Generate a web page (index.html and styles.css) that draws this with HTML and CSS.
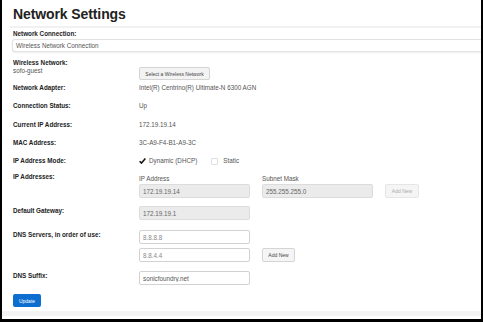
FILE: index.html
```html
<!DOCTYPE html>
<html lang="en">
<head>
    <meta charset="UTF-8">
    <title>Network Settings</title>
    <link rel="stylesheet" href="styles.css">
</head>
<body>
    <div class="frame">
        <div class="page">
            <h1>Network Settings</h1>

            <div class="conn">
                <div class="conn-label">Network Connection:</div>
                <div class="conn-box">Wireless Network Connection</div>
            </div>

            <div class="row wireless">
                <div>
                    <div class="label">Wireless Network:</div>
                    <div class="sub-value">sofo-guest</div>
                </div>
                <div>
                    <button class="btn select-btn">Select a Wireless Network</button>
                </div>
            </div>

            <div class="row info first">
                <div class="label">Network Adapter:</div>
                <div class="value">Intel(R) Centrino(R) Ultimate-N 6300 AGN</div>
            </div>
            <div class="row info">
                <div class="label">Connection Status:</div>
                <div class="value">Up</div>
            </div>
            <div class="row info">
                <div class="label">Current IP Address:</div>
                <div class="value">172.19.19.14</div>
            </div>
            <div class="row info">
                <div class="label">MAC Address:</div>
                <div class="value">3C-A9-F4-B1-A9-3C</div>
            </div>
            <div class="row info">
                <div class="label">IP Address Mode:</div>
                <div class="value mode">
                    <span class="check">
                        <svg width="7" height="6" viewBox="0 0 7 6"><path d="M0.6 3.2 L2.5 5.1 L6.4 0.6" fill="none" stroke="#111" stroke-width="1.5"/></svg>
                    </span>
                    <span>Dynamic (DHCP)</span>
                    <span class="box"></span>
                    <span>Static</span>
                </div>
            </div>

            <div class="row ip-row">
                <div class="label">IP Addresses:</div>
                <div class="ip-grid">
                    <div>
                        <div class="small-label">IP Address</div>
                        <input class="field disabled" type="text" value="172.19.19.14" disabled>
                    </div>
                    <div>
                        <div class="small-label">Subnet Mask</div>
                        <input class="field disabled" type="text" value="255.255.255.0" disabled>
                    </div>
                    <button class="btn add-btn" disabled>Add New</button>
                </div>
            </div>

            <div class="row gateway">
                <div class="label">Default Gateway:</div>
                <div><input class="field disabled" type="text" value="172.19.19.1" disabled></div>
            </div>

            <div class="row dns">
                <div class="label">DNS Servers, in order of use:</div>
                <div>
                    <input class="field light" type="text" value="8.8.8.8">
                    <div class="dns-second">
                        <input class="field light" type="text" value="8.8.4.4">
                        <button class="btn add-btn enabled">Add New</button>
                    </div>
                </div>
            </div>

            <div class="row suffix">
                <div class="label">DNS Suffix:</div>
                <div><input class="field" type="text" value="sonicfoundry.net"></div>
            </div>

            <button class="update-btn">Update</button>
        </div>
        <div class="footer"></div>
    </div>
</body>
</html>
```

FILE: styles.css
```css
body {
    margin: 0;
    padding: 0;
    font-family: "Liberation Sans", Arial, sans-serif;
    background: white;
}
.frame {
    height: 322px;
    box-sizing: border-box;
    border-left: 2px solid #000;
    border-right: 2px solid #000;
    border-bottom: 3px solid #000;
    display: flex;
    flex-direction: column;
    overflow: hidden;
}
.page {
    flex: 1;
    padding-left: 11px;
}
h1 {
    margin: 0;
    padding-top: 4px;
    font-size: 14px;
    line-height: 20px;
    color: #222;
    letter-spacing: -0.1px;
}
.conn {
    margin-top: 2px;
    margin-left: -3px;
    padding-left: 3px;
    border-top: 2px solid #f1f1f1;
}
.conn-label {
    margin-top: 2px;
    font-size: 6.3px;
    line-height: 8px;
    font-weight: bold;
    color: #222;
}
.conn-box {
    margin-top: 1px;
    margin-left: -1px;
    height: 13px;
    box-sizing: border-box;
    border: 1px solid #e2e2e2;
    border-right: none;
    border-radius: 3px 0 0 3px;
    box-shadow: 0 1px 2px rgba(0, 0, 0, 0.07);
    padding-left: 3px;
    font-size: 6.3px;
    line-height: 11px;
    color: #555;
}
.row {
    display: grid;
    grid-template-columns: 126px 1fr;
    align-items: start;
}
.label {
    font-size: 6.3px;
    line-height: 10px;
    font-weight: bold;
    color: #222;
}
.value {
    font-size: 6.3px;
    line-height: 10px;
    color: #555;
}
.wireless {
    margin-top: 7px;
}
.wireless .label {
    line-height: 8px;
}
.sub-value {
    font-size: 6.3px;
    line-height: 8px;
    color: #555;
}
.btn {
    font-family: "Liberation Sans", Arial, sans-serif;
    font-size: 5px;
    height: 13px;
    padding: 0;
    background: #f3f3f3;
    border: 1px solid #d4d4d4;
    border-radius: 2px;
    color: #444;
}
.select-btn {
    margin-top: 8px;
    width: 71px;
}
.info {
    margin-top: 8.25px;
}
.info.first {
    margin-top: 3px;
}
.mode {
    display: flex;
    align-items: center;
}
.check {
    display: flex;
    width: 7px;
    margin-right: 3px;
}
.box {
    width: 5px;
    height: 5px;
    border: 1px solid #e0e0e0;
    border-radius: 1px;
    margin-left: 14px;
    margin-right: 5px;
}
.ip-row {
    margin-top: 6px;
}
.ip-grid {
    display: grid;
    grid-template-columns: 111px 111px 34px;
    column-gap: 12px;
    align-items: end;
    padding-top: 3px;
}
.small-label {
    font-size: 6.3px;
    line-height: 8px;
    color: #555;
    margin-bottom: 1px;
}
.field {
    display: block;
    width: 111px;
    height: 14px;
    box-sizing: border-box;
    margin: 0;
    padding: 0 3px;
    border: 1px solid #d2d2d2;
    border-radius: 2px;
    font-family: "Liberation Sans", Arial, sans-serif;
    font-size: 6.3px;
    color: #555;
    background: white;
}
.field.disabled {
    background: #ebebeb;
    border-color: #dcdcdc;
    color: #666;
}
.field.light {
    color: #888;
}
.add-btn {
    width: 34px;
    height: 14px;
    background: #f5f5f5;
    border-color: #e6e6e6;
    color: #aaa;
}
.add-btn.enabled {
    width: 33px;
    border-color: #d4d4d4;
    color: #444;
}
.gateway {
    margin-top: 8px;
}
.dns {
    margin-top: 10px;
}
.dns-second {
    display: flex;
    gap: 12px;
    margin-top: 4px;
}
.suffix {
    margin-top: 9px;
}
.update-btn {
    margin-top: 9px;
    width: 28px;
    height: 13px;
    padding: 0;
    border: none;
    border-radius: 2px;
    background: #0c6fcf;
    color: white;
    font-family: "Liberation Sans", Arial, sans-serif;
    font-size: 5px;
}
.footer {
    height: 5px;
    margin-bottom: 3px;
    background: #f4f4f4;
}
```
